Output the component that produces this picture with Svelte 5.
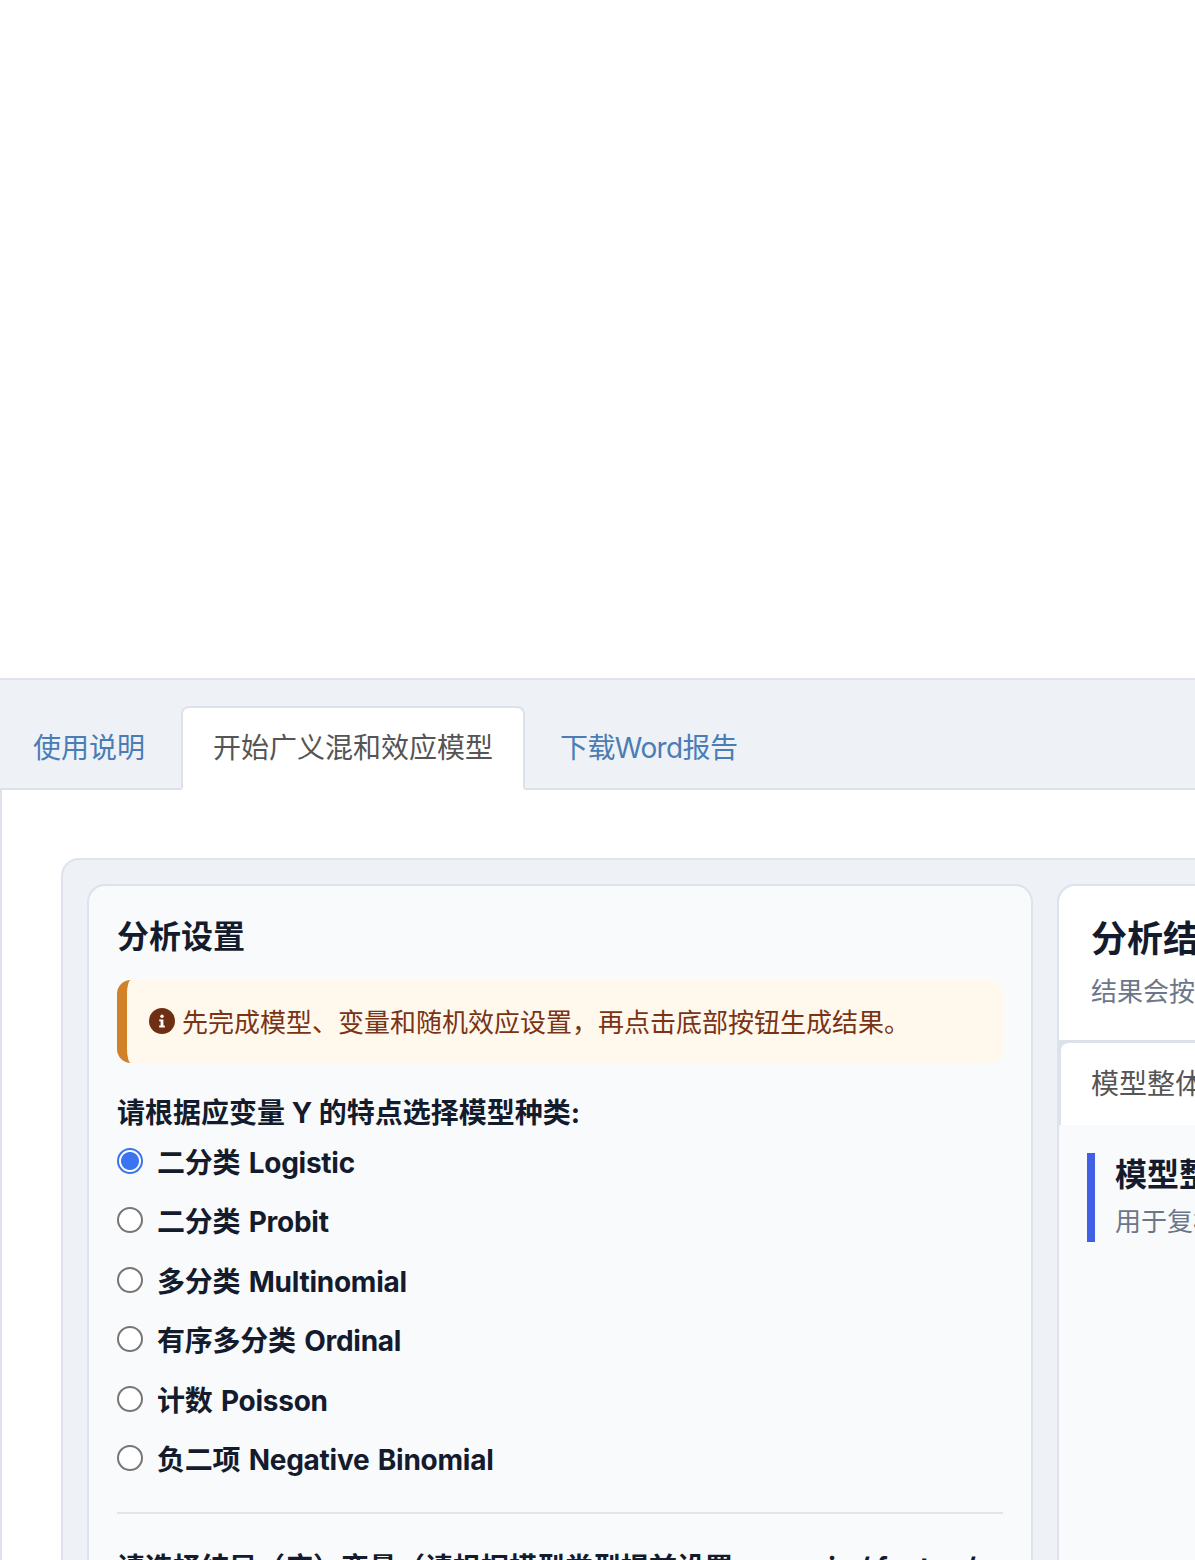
<script>
	const tabs = [
		{ label: '使用说明', active: false },
		{ label: '开始广义混和效应模型', active: true },
		{ label: '下载Word报告', active: false }
	];
	const models = [
		'二分类 Logistic',
		'二分类 Probit',
		'多分类 Multinomial',
		'有序多分类 Ordinal',
		'计数 Poisson',
		'负二项 Negative Binomial'
	];
	let model = $state(models[0]);
</script>

<div class="page">
	<div class="top-space"></div>
	<div class="tabset">
		<nav class="tab-bar">
			{#each tabs as tab}
				<a class="tab" class:active={tab.active} href="#top">{tab.label}</a>
			{/each}
		</nav>
		<div class="tab-pane">
			<div class="layout">
				<aside class="sidebar">
					<h3>分析设置</h3>
					<div class="note">
						<svg class="info" viewBox="0 0 26 26" aria-hidden="true">
							<circle cx="13" cy="13" r="13" fill="#6f2f14" />
							<circle cx="13" cy="8.2" r="1.7" fill="#fff" />
							<path d="M10.2 11.4h4.2v6.2h1.4v1.8h-5.6v-1.8h1.4v-4.4h-1.4z" fill="#fff" />
						</svg>
						<span>先完成模型、变量和随机效应设置，再点击底部按钮生成结果。</span>
					</div>
					<p class="field-label">请根据应变量 Y 的特点选择模型种类:</p>
					<div class="radios">
						{#each models as m}
							<label class="radio">
								<input type="radio" name="model" value={m} bind:group={model} />
								<span>{m}</span>
							</label>
						{/each}
					</div>
					<hr />
					<p class="field-label">请选择结局（应）变量（请根据模型类型提前设置 numeric / factor /</p>
				</aside>
				<section class="results">
					<header class="results-head">
						<h2>分析结果</h2>
						<p>结果会按模型类型分别展示</p>
					</header>
					<div class="results-tabs">
						<span class="inner-tab">模型整体结果</span>
					</div>
					<div class="results-body">
						<div class="section-title">
							<h4>模型整体结果</h4>
							<p>用于复核模型整体拟合情况</p>
						</div>
					</div>
				</section>
			</div>
		</div>
	</div>
</div>

<style>
	:global(body) {
		margin: 0;
		background: #fff;
		overflow: hidden;
		font-family: "Inter", "Liberation Sans", "Noto Sans CJK SC", sans-serif;
	}
	.page {
		width: 1195px;
		height: 1560px;
		overflow: hidden;
	}
	.top-space {
		height: 678px;
	}
	.tabset {
		width: 1300px;
		background: #eef1f6;
		border-top: 2px solid #dfe3eb;
	}
	.tab-bar {
		display: flex;
		height: 110px;
		box-sizing: border-box;
		padding: 26px 0 0 1px;
		border-bottom: 2px solid #dde2ea;
	}
	.tab {
		box-sizing: border-box;
		height: 84px;
		padding: 0 30px;
		margin-right: 3px;
		font-size: 28px;
		line-height: 80px;
		color: #4a7cb5;
		text-decoration: none;
		border: 2px solid transparent;
		border-radius: 8px 8px 0 0;
	}
	.tab:first-child {
		margin-right: 4px;
	}
	.tab:last-child {
		letter-spacing: -0.6px;
	}
	.tab.active {
		color: #555;
		background: #fff;
		border-color: #dde2ea;
		border-bottom-color: #fff;
	}
	.tab-pane {
		background: #fff;
		border-left: 2px solid #dde2ea;
		padding: 68px 0 0 59px;
		height: 800px;
	}
	.layout {
		display: flex;
		gap: 24px;
		padding: 24px;
		background: #eef1f6;
		border: 2px solid #dfe3eb;
		border-radius: 18px 0 0 0;
		height: 800px;
	}
	.sidebar {
		box-sizing: border-box;
		flex: 0 0 946px;
		padding: 30px 28px 0;
		background: #f8fafc;
		border: 2px solid #dde2ec;
		border-radius: 18px;
	}
	h3 {
		margin: 0 0 22px;
		font-size: 32px;
		line-height: 42px;
		font-weight: 700;
		color: #141b2d;
	}
	.note {
		display: flex;
		align-items: center;
		gap: 7px;
		height: 83px;
		box-sizing: border-box;
		padding: 0 0 2px 22px;
		font-size: 26px;
		color: #7a3315;
		background: #fff8ec;
		border-left: 10px solid #d18127;
		border-radius: 14px;
	}
	.info {
		width: 26px;
		height: 26px;
		flex: none;
	}
	.field-label {
		margin: 0;
		font-size: 28px;
		line-height: 36px;
		font-weight: 700;
		color: #141b2d;
		white-space: nowrap;
	}
	.note + .field-label {
		margin-top: 32px;
	}
	.radios {
		display: flex;
		flex-direction: column;
	}
	.radio {
		display: flex;
		align-items: center;
		gap: 14px;
		height: 59.5px;
		font-size: 28px;
		font-weight: 700;
		letter-spacing: -0.25px;
		word-spacing: 2px;
		color: #141b2d;
	}
	.radio input {
		appearance: none;
		box-sizing: border-box;
		width: 26px;
		height: 26px;
		margin: 0;
		background: #fff;
		border: 2px solid #767676;
		border-radius: 50%;
	}
	.radio input:checked {
		border-color: #3b74f0;
		background: radial-gradient(circle, #3b74f0 0 8.5px, #fff 9.5px);
	}
	hr {
		margin: 24px 0 36px;
		border: 0;
		border-top: 2px solid #e0e5ec;
	}
	.results {
		flex: 1;
		background: #f8fafc;
		border: 2px solid #dde2ec;
		border-radius: 18px 0 0 0;
	}
	.results-head {
		box-sizing: border-box;
		height: 156px;
		padding: 30px 32px 0;
		background: #fff;
		border-radius: 18px 0 0 0;
		border-bottom: 2px solid #dde2ea;
	}
	h2 {
		margin: 0;
		font-size: 36px;
		line-height: 46px;
		font-weight: 700;
		color: #141b2d;
	}
	.results-head p {
		margin: 13px 0 0;
		font-size: 26px;
		line-height: 34px;
		color: #6c7689;
		white-space: nowrap;
	}
	.results-tabs {
		background: #dde2ea;
		padding: 1px 0 0 2px;
	}
	.inner-tab {
		display: block;
		height: 82px;
		padding-left: 30px;
		background: #fff;
		border-radius: 8px 0 0 0;
		font-size: 28px;
		line-height: 82px;
		color: #555;
		white-space: nowrap;
	}
	.results-body {
		padding: 28px;
	}
	.section-title {
		box-sizing: border-box;
		padding: 1px 0 0 20px;
		border-left: 8px solid #3f60e5;
		height: 89px;
		white-space: nowrap;
	}
	h4 {
		margin: 0;
		font-size: 32px;
		line-height: 42px;
		font-weight: 700;
		color: #141b2d;
	}
	.section-title p {
		margin: 8px 0 0;
		font-size: 26px;
		line-height: 36px;
		color: #6c7689;
	}
</style>
